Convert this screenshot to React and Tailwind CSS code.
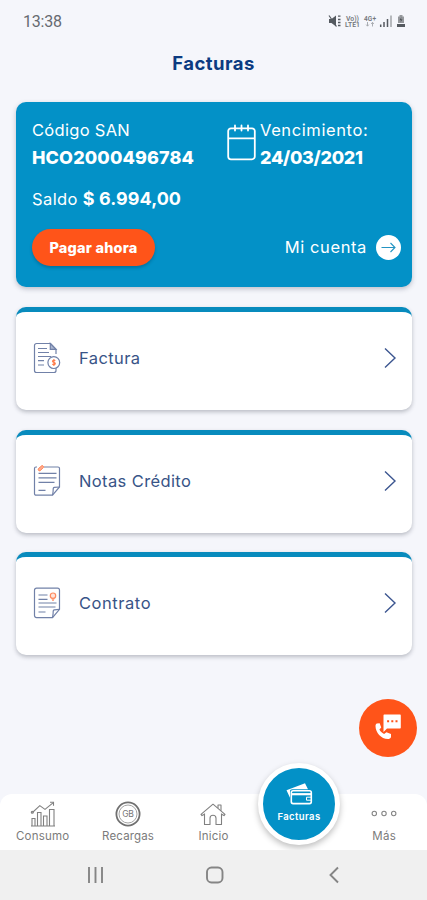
import clsx from "clsx";

function StatusIcons() {
  return (
    <svg width="80" height="14" viewBox="0 0 80 14" className="text-[#555a60]">
      <path d="M1 5h2.5L8 1.5v11L3.5 9H1z" fill="currentColor" />
      <path d="M1 1.5l7.5 11" stroke="currentColor" strokeWidth="1.2" />
      <path d="M10 2.2h2.5M10 5.5h2.5M10 8.5h2.5M10 11.5h2.5" stroke="currentColor" strokeWidth="1.3" />
      <g fill="#73777c" fontFamily="Roboto, sans-serif" fontWeight="600">
        <text x="18" y="6.5" fontSize="6.8" textLength="13">Vo))</text>
        <text x="17" y="13" fontSize="6.8" textLength="15">LTE1</text>
        <text x="36" y="6.5" fontSize="6.5" textLength="12">4G+</text>
      </g>
      <path d="M39.5 8v4m-1.3-1.4l1.3 1.6 1.3-1.6M44.5 12.5V8.5m-1.3 1.4l1.3-1.6 1.3 1.6" stroke="#a2a5a9" strokeWidth="0.9" fill="none" />
      <path d="M52.7 10.5V13M56 8v5M59.5 5v8" stroke="currentColor" strokeWidth="1.5" />
      <path d="M63 1.5V13" stroke="#b0b3b6" strokeWidth="1.8" />
      <path d="M70 2.5h1.5V1h3v1.5H76V9h-6z" fill="#95989c" />
      <path d="M73.5 3l-2 3.3H73L72.5 8.5l2-3.2H73z" fill="#4b4f54" />
      <path d="M69 10h8v3h-8z" fill="currentColor" />
    </svg>
  );
}

function CalendarIcon() {
  return (
    <svg width="29" height="38" viewBox="0 0 29 38" fill="none" stroke="#fff" strokeWidth="1.8" strokeLinecap="round">
      <path d="M4.5 5.3H4a2.8 2.8 0 0 0-2.8 2.8v25.4A2.8 2.8 0 0 0 4 36.3h21a2.8 2.8 0 0 0 2.8-2.8V8.1A2.8 2.8 0 0 0 25 5.3H4.5M1.2 15.3h26.6" />
      <path d="M8 2.4v5.2M14.5 2.4v5.2M21 2.4v5.2" />
    </svg>
  );
}

function InvoiceIcon() {
  return (
    <svg width="28" height="32" viewBox="0 0 28 32" fill="none" stroke="#7181a8" strokeWidth="1.2">
      <path d="M23 12V7.3L17.5 1.5H3.5a2 2 0 0 0-2 2v25a2 2 0 0 0 2 2H21a2 2 0 0 0 2-2v-2.3" />
      <path d="M17.3 1.5v5.8H23z" fill="#aab5cf" />
      <path d="M5 6.5h9M5 10.5h11M5 14.5h13M5 18.7h6M5 23h6" />
      <circle cx="20.8" cy="20.6" r="5.9" fill="#fff" />
      <path d="M22.3 18.8c-.5-.8-2.8-.8-2.8.5s2.8.9 2.8 2.3-2.5 1.4-2.9.3M20.9 17v7" stroke="#ff7c4b" strokeWidth="1.2" />
    </svg>
  );
}

function NoteIcon() {
  return (
    <svg width="28" height="32" viewBox="0 0 28 32" fill="none" stroke="#7181a8" strokeWidth="1.2">
      <path d="M4 2H3a1.5 1.5 0 0 0-1.5 1.5v25.2a1.5 1.5 0 0 0 1.5 1.5h16.5l7-8.2V3.5A1.5 1.5 0 0 0 25 2H11" />
      <path d="M26.5 22l-5.2.4c-1.6.1-1 2.5-1.2 3.8-.1 1.5-.6 4-.6 4" />
      <path d="M5.5 8.3h18M5.5 12.8h18M5.5 17.3h16M5.5 25.3h7" />
      <path d="M5.5 3.5l3.8-3.2 1.5 1.8L7.2 5.7C5.6 6.5 4.7 4.5 5.5 3.5z" fill="#ffab8e" stroke="#ff7c4b" strokeWidth="0.9" />
    </svg>
  );
}

function ContractIcon() {
  return (
    <svg width="28" height="32" viewBox="0 0 28 32" fill="none" stroke="#7181a8" strokeWidth="1.2">
      <path d="M19.5 30.6H3.5a2 2 0 0 1-2-2V3.2a2 2 0 0 1 2-2h21a2 2 0 0 1 2 2v19.2z" />
      <path d="M26.5 22.4l-5.2.4c-1.6.1-1 2.5-1.2 3.8-.1 1.5-.6 4-.6 4" />
      <path d="M5.5 8h9M5.5 12.3h9M5.5 16h18M5.5 20h17M5.5 25h7" />
      <path d="M18.7 11.2L20 14l1.3-2.8" stroke="#ff9a76" strokeWidth="1" />
      <circle cx="20" cy="8.7" r="2.7" stroke="#ff8a5f" fill="#ffe4da" />
    </svg>
  );
}

function ChartIcon() {
  return (
    <svg width="26" height="26" viewBox="0 0 26 26" fill="none" stroke="#808080" strokeWidth="1.1">
      <path d="M2 25v-7.5h3V25M7.5 25V11.5h3.5V25M13.5 25V15H17v10M19.5 25V8.5H24V25M1 25h24" />
      <path d="M2.5 11.5L9.8 4.6l5.2 3.8L23 1.8" />
      <circle cx="2.3" cy="11.3" r="1" />
      <path d="M20 1.3h3.5v3.5" />
    </svg>
  );
}

function GbIcon() {
  return (
    <svg width="26" height="26" viewBox="0 0 26 26" fill="none" stroke="#707070">
      <circle cx="13" cy="13" r="11.6" strokeWidth="1.8" />
      <circle cx="13" cy="13" r="9" strokeWidth="0.9" stroke="#999" />
      <text x="7.2" y="16.2" fontSize="8.6" textLength="11.6" fill="#777" stroke="none" fontFamily="Inter, sans-serif">GB</text>
    </svg>
  );
}

function HomeIcon() {
  return (
    <svg width="26" height="26" viewBox="0 0 26 26" fill="none" stroke="#808080" strokeWidth="1.1" strokeLinejoin="round">
      <path d="M4.5 13.2L2 14.6 1 13.4 13 3.2l12 10.2-1 1.2-2.5-1.4" />
      <path d="M4.5 12.5v11H10v-6.2a3 3 0 0 1 6 0v6.2h5.5v-11M18 7V4h3v5.8" />
    </svg>
  );
}

function DotsIcon() {
  return (
    <svg width="26" height="26" viewBox="0 0 26 26" fill="none" stroke="#858585" strokeWidth="1.1">
      <circle cx="3.3" cy="12.5" r="2.2" />
      <circle cx="13" cy="12.5" r="2.2" />
      <circle cx="22.7" cy="12.5" r="2.2" />
    </svg>
  );
}

function CardsIcon() {
  return (
    <svg width="28" height="24" viewBox="0 0 28 24" fill="none">
      <path d="M1.5 8.2L20 1.3l3 6H7.3c-1.5 0-2.3.8-2.3 2.2v6.3z" fill="#fff" />
      <rect x="6.3" y="8.8" width="20" height="12.8" rx="1.8" stroke="#fff" strokeWidth="1.6" />
      <path d="M6.3 12.2h20" stroke="#fff" strokeWidth="2.2" />
      <path d="M26 15.2h-4.5v3H26" stroke="#fff" strokeWidth="1" />
    </svg>
  );
}

function PhoneChatIcon() {
  return (
    <svg width="27" height="26" viewBox="0 0 27 26">
      <path d="M9.2.5h15.6c.6 0 1 .4 1 1v12c0 .6-.4 1-1 1H12L8.5 18V1.2c0-.4.3-.7.7-.7z" fill="#fff" />
      <path d="M12.1 6.2h2v2h-2zM16.3 6.2h2v2h-2zM20.5 6.2h2v2h-2z" fill="#ff5419" />
      <path d="M1.7 9.5l3-.3 1.5 4.3-1.8 2c1 2 2.5 3.4 4.7 4.4l2.3-1.6 4.6 1.8v3c-.5 1.4-1.7 2-3 2C6 25 .6 18.5.5 12c0-1.2.4-2 1.2-2.5z" fill="#fff" />
    </svg>
  );
}

const items = [
  { label: "Factura", icon: InvoiceIcon, tracking: "tracking-[0.4px]" },
  { label: "Notas Crédito", icon: NoteIcon, tracking: "tracking-[0.38px]" },
  { label: "Contrato", icon: ContractIcon, tracking: "tracking-[0.55px]" },
];

function ItemCard({ label, icon: Icon, tracking }) {
  return (
    <button className="flex h-[103px] w-full items-center rounded-[10px] border-t-[5px] border-[#088bbd] bg-white pr-[15px] pb-[6px] pl-[17px] shadow-[0_2px_4px_rgba(60,65,80,0.32)]">
      <Icon />
      <span className={clsx("ml-[18px] text-[16.5px] leading-5 text-[#385487]", tracking)}>{label}</span>
      <svg className="ml-auto" width="14" height="22" viewBox="0 0 14 22" fill="none" stroke="#3c5690" strokeWidth="1.4">
        <path d="M2 1.5L12 11 2 20.5" />
      </svg>
    </button>
  );
}

function NavItem({ label, icon: Icon, tracking }) {
  return (
    <div className="flex w-[85.4px] flex-col items-center pt-[7px]">
      <Icon />
      <span className={clsx("mt-[2px] text-[11.5px] leading-[14px] text-[#7b7b7b]", tracking)}>{label}</span>
    </div>
  );
}

function App() {
  return (
    <div className="flex h-[900px] w-[427px] flex-col overflow-hidden bg-[#f5f6fb] font-[Inter,sans-serif]">
      <header className="flex h-[42px] items-center justify-between pr-[19px] pl-[23px]">
        <span className="pt-px font-[Roboto,sans-serif] text-[16px] tracking-[-0.2px] text-[#666a70]">13:38</span>
        <StatusIcons />
      </header>

      <h1 className="flex h-[60px] items-start justify-center pt-[9px] text-[18.5px] leading-6 font-bold tracking-[0.45px] text-[#0c3b81]">
        Facturas
      </h1>

      <main className="flex flex-col pr-[15px] pl-4">
        <section className="flex h-[185px] flex-col rounded-[10px] bg-[#0391c7] pt-[18px] pr-[11px] pl-4 text-white shadow-[0_2px_5px_rgba(60,65,90,0.3)]">
          <div className="flex">
            <div className="w-[195px]">
              <p className="text-[16.5px] leading-5 tracking-[0.3px]">Código SAN</p>
              <p className="mt-[6px] text-[18px] leading-6 font-extrabold tracking-[0.12px]">HCO2000496784</p>
            </div>
            <div className="pt-[3px]">
              <CalendarIcon />
            </div>
            <div className="ml-[4px]">
              <p className="text-[16.5px] leading-5 tracking-[0.6px]">Vencimiento:</p>
              <p className="mt-[6px] text-[18px] leading-6 font-extrabold tracking-[-0.3px]">24/03/2021</p>
            </div>
          </div>
          <p className="mt-[17px] flex items-baseline gap-[5px] leading-6">
            <span className="text-[16.5px] tracking-[0.4px]">Saldo</span>
            <span className="text-[18px] font-bold tracking-[0.05px]">$ 6.994,00</span>
          </p>
          <div className="mt-[18px] flex items-center justify-between">
            <button className="h-[37px] w-[123px] rounded-full bg-[#ff5419] text-[14.5px] font-extrabold tracking-[0.2px] shadow-[0_2px_3px_rgba(0,50,80,0.3)]">
              Pagar ahora
            </button>
            <div className="flex items-center gap-[9px]">
              <span className="text-[16.5px] tracking-[0.6px]">Mi cuenta</span>
              <span className="flex size-[25px] items-center justify-center rounded-full bg-white">
                <svg width="15" height="11" viewBox="0 0 15 11" fill="none" stroke="#2494c2" strokeWidth="1.1">
                  <path d="M.5 5.5H14M9.5 1L14 5.5 9.5 10" />
                </svg>
              </span>
            </div>
          </div>
        </section>

        <div className="mt-5 flex flex-col gap-[19.5px]">
          {items.map((item) => (
            <ItemCard key={item.label} {...item} />
          ))}
        </div>
      </main>

      <div className="mt-auto flex h-[95px] justify-end pr-[10px]">
        <button className="flex size-[58px] items-center justify-center rounded-full bg-[#ff5419] pb-[3px]">
          <PhoneChatIcon />
        </button>
      </div>

      <nav className="relative flex h-[56px] shrink-0 rounded-t-[12px] bg-white">
        <NavItem label="Consumo" icon={ChartIcon} tracking="tracking-[0.2px]" />
        <NavItem label="Recargas" icon={GbIcon} tracking="tracking-[0.15px]" />
        <NavItem label="Inicio" icon={HomeIcon} tracking="tracking-[0.2px]" />
        <div className="w-[85.4px]" />
        <NavItem label="Más" icon={DotsIcon} tracking="tracking-[0.3px]" />
        {/* raised active tab */}
        <div className="absolute -top-[31px] left-[258px] flex size-[82px] flex-col items-center rounded-full border-[5px] border-white bg-[#0391c7] pt-[14px] text-white shadow-[0_3px_6px_rgba(0,0,0,0.25)]">
          <CardsIcon />
          <span className="mt-[5px] text-[9.5px] leading-[12px] font-semibold tracking-[0.4px]">Facturas</span>
        </div>
      </nav>

      <footer className="relative z-10 flex h-[50px] shrink-0 items-center bg-[#f0f0f0]">
        <svg width="427" height="50" viewBox="0 0 427 50" fill="none" stroke="#858585" strokeWidth="1.9">
          <path d="M89 17v16M95.5 17v16M102 17v16" />
          <rect x="207" y="17.5" width="15.5" height="15" rx="4.5" />
          <path d="M338 17.5l-7.5 7.5 7.5 7.5" />
        </svg>
      </footer>
    </div>
  );
}

export default App;
